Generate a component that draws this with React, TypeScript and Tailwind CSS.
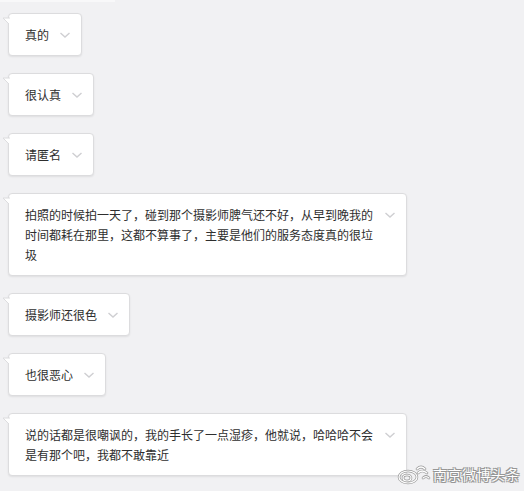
import React from "react";

const items: string[] = [
  "真的",
  "很认真",
  "请匿名",
  "拍照的时候拍一天了，碰到那个摄影师脾气还不好，从早到晚我的时间都耗在那里，这都不算事了，主要是他们的服务态度真的很垃圾",
  "摄影师还很色",
  "也很恶心",
  "说的话都是很嘲讽的，我的手长了一点湿疹，他就说，哈哈哈不会是有那个吧，我都不敢靠近",
];

function Chevron() {
  return (
    <svg width="12" height="20" viewBox="0 0 12 20" className="shrink-0">
      <path d="M1.5 8 L6 12 L10.5 8" fill="none" stroke="#cfcfd2" strokeWidth="1.4" />
    </svg>
  );
}

function Bubble({ text }: { text: string }) {
  return (
    <div className="relative flex items-start self-start rounded-[4px] border border-[#dcdcde] bg-white pl-4 pr-[10px] pt-[11px] pb-[10px] shadow-[0_1px_2px_rgba(0,0,0,0.08)]">
      <svg
        width="8"
        height="8"
        viewBox="0 0 8 8"
        className="absolute left-[-7px] top-[3px]"
      >
        <path d="M8 1 L1 1 L8 8 Z" fill="#ffffff" />
        <path d="M8 1 L1 1 L7 7" fill="none" stroke="#dcdcde" strokeWidth="1" />
      </svg>
      <div className="max-w-[349px] text-[12px] leading-[20px] text-[#2e2e2e]">{text}</div>
      <div className="ml-[10px]">
        <Chevron />
      </div>
    </div>
  );
}

function WeiboLogo() {
  return (
    <svg width="34" height="22" viewBox="0 0 34 22">
      <g fill="none" stroke="#9a9a9a" strokeWidth="2.6" strokeLinecap="round">
        <ellipse cx="11" cy="14" rx="9" ry="6" />
        <ellipse cx="10" cy="15" rx="4" ry="3" />
        <path d="M20 6 Q24 2 28 6" />
        <path d="M21 10 Q25 6 30 10" />
        <path d="M26 15 Q29 12 32 15" />
      </g>
      <g fill="none" stroke="#ffffff" strokeWidth="1.2" strokeLinecap="round">
        <ellipse cx="11" cy="14" rx="9" ry="6" />
        <ellipse cx="10" cy="15" rx="4" ry="3" />
        <path d="M20 6 Q24 2 28 6" />
        <path d="M21 10 Q25 6 30 10" />
        <path d="M26 15 Q29 12 32 15" />
      </g>
    </svg>
  );
}

export default function App() {
  return (
    <div
      className="relative h-[491px] w-[524px] overflow-hidden bg-[#f1f1f3]"
      style={{ fontFamily: '"Noto Sans CJK SC", "Noto Sans", sans-serif' }}
    >
      <div className="absolute left-0 top-0 h-[2px] w-[115px] bg-[#f8f8f9]" />
      <div className="flex flex-col gap-[17px] pl-2 pt-[13px]">
        {items.map((t, i) => (
          <Bubble key={i} text={t} />
        ))}
      </div>
      <div className="absolute right-[4px] bottom-[6px] flex items-center gap-[2px]">
        <WeiboLogo />
        <span
          className="text-[14px] leading-[20px] tracking-[0.5px] text-white"
          style={{
            textShadow:
              "0 0 1px #8a8a8a, 0 0 1px #8a8a8a, 1px 1px 0 #9a9a9a, -1px -1px 0 #9a9a9a, 1px -1px 0 #9a9a9a, -1px 1px 0 #9a9a9a",
          }}
        >
          南京微博头条
        </span>
      </div>
    </div>
  );
}
